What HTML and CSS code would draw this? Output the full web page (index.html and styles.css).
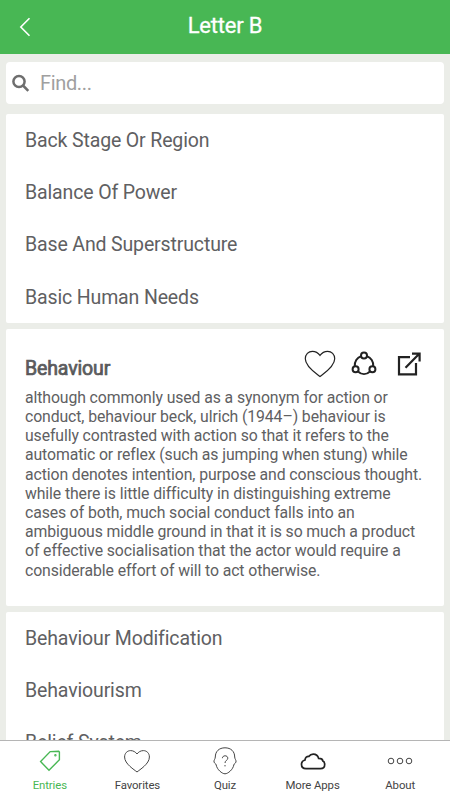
FILE: index.html
```html
<!DOCTYPE html>
<html lang="en">
<head>
    <meta charset="UTF-8">
    <meta name="viewport" content="width=device-width, initial-scale=1.0">
    <title>Letter B</title>
    <link rel="stylesheet" href="styles.css">
</head>
<body>
    <header class="header">
        <button class="back" aria-label="Back">
            <svg width="12" height="20" viewBox="0 0 12 20"><path d="M10.5 1.3 L1.8 10 L10.5 18.7"/></svg>
        </button>
        <h1>Letter B</h1>
    </header>

    <main class="content">
        <label class="search">
            <svg width="18" height="18" viewBox="0 0 18 18"><circle cx="7" cy="7.5" r="5.6"/><path d="M11 11.5 L16.3 16.8"/></svg>
            <input type="text" placeholder="Find...">
        </label>

        <ul class="card list">
            <li>Back Stage Or Region</li>
            <li>Balance Of Power</li>
            <li>Base And Superstructure</li>
            <li>Basic Human Needs</li>
        </ul>

        <article class="card entry">
            <div class="entry-top">
                <h2>Behaviour</h2>
                <div class="actions">
                    <svg class="heart" width="32" height="28" viewBox="0 0 32 28"><path d="M16 26.5 C13 24 1.3 17 1.3 8.8 C1.3 4.5 4.4 1.3 8.4 1.3 C11.6 1.3 14.3 3 16 5.4 C17.7 3 20.4 1.3 23.6 1.3 C27.6 1.3 30.7 4.5 30.7 8.8 C30.7 17 19 24 16 26.5 Z"/></svg>
                    <svg class="share" width="26" height="26" viewBox="0 0 26 26"><circle cx="13" cy="4.4" r="3"/><circle cx="4.6" cy="18.2" r="3"/><circle cx="21.4" cy="18.2" r="3"/><path d="M10 5.2 C6 6.6 3.4 10.8 3.8 15.2 M16 5.2 C20 6.6 22.6 10.8 22.2 15.2 M7 20.4 C10.6 23.8 15.4 23.8 19 20.4"/></svg>
                    <svg class="open" width="24" height="24" viewBox="0 0 24 24"><path d="M13 5.2 H2 V22.4 H19 V11"/><path d="M8.5 15.8 L21.5 2.5 M15 1.6 H22.6 V9.4"/></svg>
                </div>
            </div>
            <p>although commonly used as a synonym for action or conduct, behaviour beck, ulrich (1944–) behaviour is usefully contrasted with action so that it refers to the automatic or reflex (such as jumping when stung) while action denotes intention, purpose and conscious thought. while there is little difficulty in distinguishing extreme cases of both, much social conduct falls into an ambiguous middle ground in that it is so much a product of effective socialisation that the actor would require a considerable effort of will to act otherwise.</p>
        </article>

        <ul class="card list">
            <li>Behaviour Modification</li>
            <li>Behaviourism</li>
            <li>Belief System</li>
        </ul>
    </main>

    <nav class="tabs">
        <a class="tab active">
            <svg width="28" height="28" viewBox="0 0 28 28"><path d="M14.2 4.6 L22.7 4.3 L23.4 5 V12.8 L13 23.2 L4.6 14.6 Z"/><circle cx="19.4" cy="8.2" r=".5"/></svg>
            <span>Entries</span>
        </a>
        <a class="tab">
            <svg width="28" height="28" viewBox="0 0 28 28"><path d="M14 25 C11.5 22.8 1.6 17 1.6 10 C1.6 6.3 4.2 3.6 7.6 3.6 C10.3 3.6 12.6 5 14 7 C15.4 5 17.7 3.6 20.4 3.6 C23.8 3.6 26.4 6.3 26.4 10 C26.4 17 16.5 22.8 14 25 Z"/></svg>
            <span>Favorites</span>
        </a>
        <a class="tab">
            <svg width="28" height="28" viewBox="0 0 28 28"><path d="M14 .8 C8 .8 4.3 4.5 4.3 10 C4.3 12 2.6 13.2 3 15 C3.3 16.4 5 16.4 5.2 18 C6 22.5 11 26.8 14 26.8 C17 26.8 22 22.5 22.8 18 C23 16.4 24.7 16.4 25 15 C25.4 13.2 23.7 12 23.7 10 C23.7 4.5 20 .8 14 .8 Z"/><path d="M11.4 11.2 C11.4 8 16.8 8 16.8 11.2 C16.8 13.3 14 13.4 14 16 M14 18 V19.4"/></svg>
            <span>Quiz</span>
        </a>
        <a class="tab cloud">
            <svg width="28" height="28" viewBox="0 0 28 28"><path d="M7 21.6 C4 21.6 2.5 19.7 2.5 17.4 C2.5 15 4 13.5 6 13 C6.2 10.3 7.8 9.1 10 9.3 C11.2 7.4 12.6 7.1 14.2 7.1 C17.4 7.1 19 8.9 19.6 11.4 C22.5 11.3 23.6 12.5 23.8 13.9 C25.2 14.5 25.7 16.1 25.7 17.5 C25.7 19.9 24 21.6 21.5 21.6 Z"/></svg>
            <span>More Apps</span>
        </a>
        <a class="tab">
            <svg width="28" height="28" viewBox="0 0 28 28"><circle cx="5" cy="14" r="2.8"/><circle cx="14" cy="14" r="2.8"/><circle cx="23" cy="14" r="2.8"/></svg>
            <span>About</span>
        </a>
    </nav>
</body>
</html>
```

FILE: styles.css
```css
* {
    box-sizing: border-box;
}
body {
    margin: 0;
    height: 100vh;
    display: flex;
    flex-direction: column;
    overflow: hidden;
    font-family: Roboto, sans-serif;
    color: #606062;
    background-color: #ebede8;
}
svg {
    display: block;
    fill: none;
    stroke: currentColor;
}
h1, h2, p, ul {
    margin: 0;
    padding: 0;
}
.header {
    flex: none;
    display: grid;
    grid-template-columns: 60px 1fr 60px;
    align-items: center;
    height: 54px;
    color: #fff;
    background-color: #48b754;
}
.header h1 {
    padding-bottom: 4px;
    font-size: 22px;
    font-weight: 400;
    letter-spacing: -0.2px;
    text-align: center;
    -webkit-text-stroke: 0.3px #fff;
}
.back {
    padding: 0 0 0 19px;
    border: none;
    background: none;
    color: #fff;
    stroke-width: 1.6;
}
.content {
    flex: 1;
    min-height: 0;
    overflow: hidden;
    padding: 8px 6px 0;
}
.search {
    display: flex;
    align-items: center;
    gap: 10px;
    height: 42px;
    margin-bottom: 10px;
    padding-left: 6px;
    border-radius: 4px;
    background-color: #fff;
}
.search svg {
    stroke: #6e6e6e;
    stroke-width: 2.5;
}
.search input {
    flex: 1;
    padding: 0;
    border: none;
    outline: none;
    font: 20px Roboto, sans-serif;
    letter-spacing: -0.35px;
}
.search input::placeholder {
    color: #a0a0a0;
}
.card {
    margin-bottom: 6px;
    border-radius: 2px;
    background-color: #fff;
}
.list {
    padding: 0 19px;
    list-style: none;
    font-size: 19.5px;
    letter-spacing: -0.14px;
}
.list li {
    height: 52.2px;
    line-height: 53.4px;
}
.entry {
    height: 277px;
    padding: 19px 19px 0;
}
.entry-top {
    display: flex;
    justify-content: space-between;
    height: 40px;
}
.entry h2 {
    padding-top: 9px;
    font-size: 19.5px;
    font-weight: 400;
    letter-spacing: -0.14px;
    -webkit-text-stroke: 0.7px #555557;
}
.actions {
    display: flex;
    align-items: center;
    height: 33px;
    padding-right: 4px;
    color: #222;
}
.heart {
    margin-right: 15px;
    stroke-width: 1.2;
}
.share {
    margin-right: 20px;
    stroke-width: 2;
}
.open {
    stroke-width: 2.2;
}
.entry p {
    font-size: 15.8px;
    line-height: 19.2px;
    letter-spacing: -0.1px;
}
.tabs {
    flex: none;
    display: flex;
    height: 60px;
    padding: 0 6px;
    border-top: 1px solid #b5b5b5;
    background-color: #fff;
}
.tab {
    flex: 1;
    display: flex;
    flex-direction: column;
    align-items: center;
    padding-top: 6px;
    gap: 3px;
    font-size: 11.4px;
    letter-spacing: -0.1px;
    line-height: 14px;
    color: #444;
}
.active {
    color: #48b754;
}
.active svg {
    stroke-width: 1.4;
}
.cloud svg {
    stroke: #222;
    stroke-width: 1.7;
}
```
